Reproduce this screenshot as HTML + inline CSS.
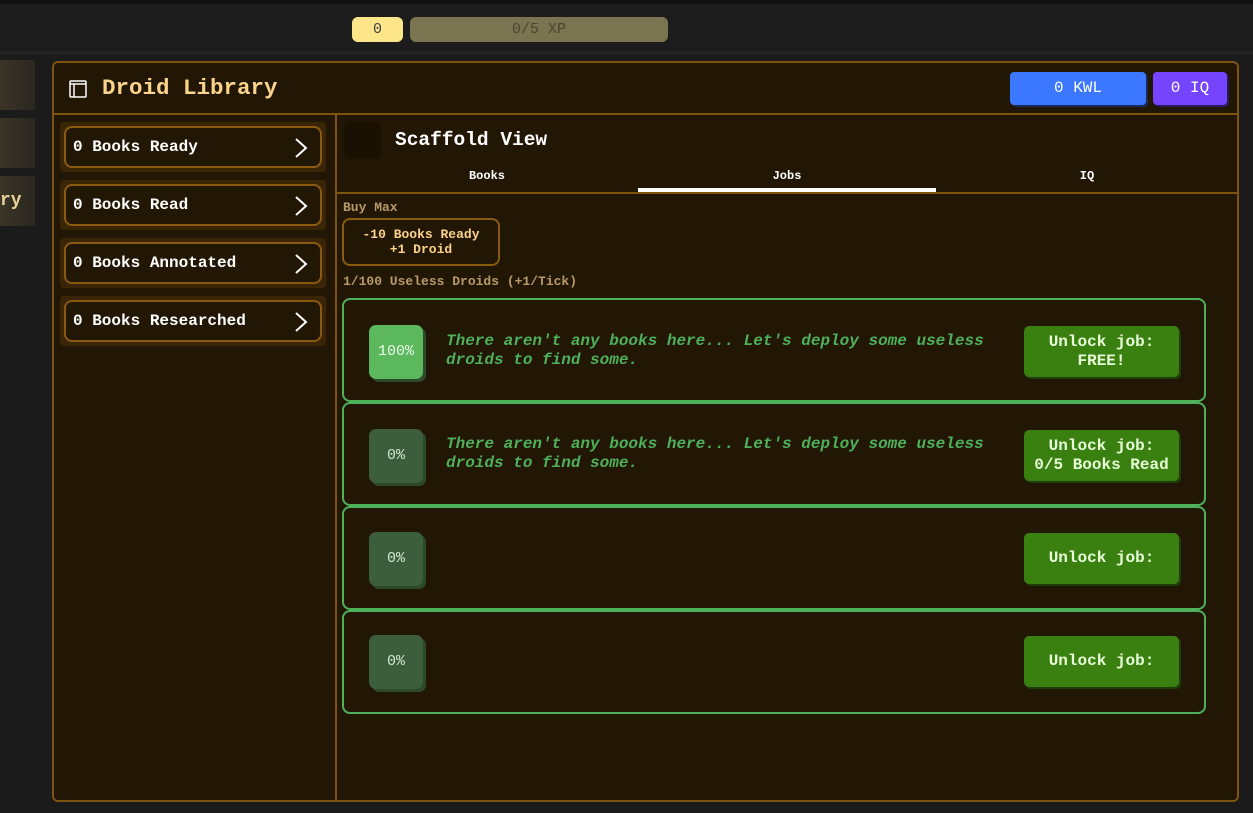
<!DOCTYPE html>
<html><head><meta charset="utf-8"><style>
*{box-sizing:border-box;margin:0;padding:0}
body{width:1253px;height:813px;background:#1b1b1b;position:relative;overflow:hidden;font-family:"Liberation Mono",monospace;color:#fff}
.abs{position:absolute}
.top{left:0;top:0;width:1253px;height:54px;background:#1c1c1c;border-top:4px solid #111;border-bottom:3px solid #222}
.lvl{left:352px;top:17px;width:51px;height:25px;background:#fde68a;border-radius:6px;color:#444;font-size:15px;text-align:center;line-height:25px}
.xp{left:410px;top:17px;width:258px;height:25px;background:#7a7450;border-radius:6px;color:#4a4630;font-size:15px;text-align:center;line-height:25px}
.side{left:0;width:35px;height:50px;background:linear-gradient(90deg,#3a3526,#2a2720)}
.panel{left:52px;top:61px;width:1187px;height:741px;background:#221604;border:2px solid #7f5410;border-radius:6px}
.title{left:102px;top:75px;font-size:22.5px;font-weight:bold;color:#fcd38a}
.kwl{left:1010px;top:72px;width:136px;height:33px;background:#3b78ff;border-radius:4px;text-align:center;line-height:33px;font-size:16px;box-shadow:2px 2px 0 #1c2a5a}
.iq{left:1153px;top:72px;width:74px;height:33px;background:#7444ff;border-radius:4px;text-align:center;line-height:33px;font-size:16px;box-shadow:2px 2px 0 #2a1a5a}
.hline{left:53px;top:113px;width:1185px;height:2px;background:#7f5410}
.vline{left:335px;top:114px;width:2px;height:687px;background:#7f5410}
.item{left:60px;width:266px;height:50px;background:#3a2506;border-radius:4px;padding:4px}
.item div{width:100%;height:100%;border:2px solid #8a5a10;border-radius:8px;background:#221604;font-weight:bold;font-size:16px;line-height:39px;padding-left:7px;position:relative}
.item svg{position:absolute;right:12px;top:9px}
.tab{top:168px;font-size:12px;font-weight:bold;text-align:center;width:298px}
.rl{left:336px;top:192px;width:902px;height:2px;background:#7f5410}
.row{left:342px;width:864px;height:104px;border:2px solid #4fb05a;border-radius:8px}
.pct{width:54px;height:54px;border-radius:7px;left:369px;font-size:15px;text-align:center;line-height:54px;box-shadow:3px 3px 0 #2c4a2a}
.msg{left:446px;font-style:italic;font-weight:bold;color:#4fb05a;font-size:16px;line-height:19px;width:570px}
.btn{left:1024px;width:155px;height:51px;background:#3a8010;border-radius:5px;font-weight:bold;font-size:16px;color:#e8ffd8;text-align:center;display:flex;align-items:center;justify-content:center;line-height:19px;box-shadow:2px 2px 0 #1f3d0a}
</style></head><body>
<div class="abs top"></div>
<div class="abs lvl">0</div>
<div class="abs xp">0/5 XP</div>
<div class="abs side" style="top:60px"></div>
<div class="abs side" style="top:118px"></div>
<div class="abs side" style="top:176px;color:#e8d29a;font-weight:bold;font-size:18px;line-height:50px">ry</div>
<div class="abs panel"></div>
<svg class="abs" style="left:68px;top:79px" width="20" height="20" viewBox="0 0 20 20" fill="none" stroke="#fff" stroke-width="1.5"><rect x="2" y="2" width="16" height="16" rx="1"/><line x1="2" y1="5" x2="18" y2="5"/><line x1="6" y1="5" x2="6" y2="18"/></svg>
<div class="abs title">Droid Library</div>
<div class="abs kwl">0 KWL</div>
<div class="abs iq">0 IQ</div>
<div class="abs hline"></div>
<div class="abs vline"></div>
<div class="abs item" style="top:122px"><div>0 Books Ready<svg width="14" height="22" viewBox="0 0 14 22" fill="none" stroke="#fff" stroke-width="2"><path d="M2 2 L12 11 L2 20"/></svg></div></div>
<div class="abs item" style="top:180px"><div>0 Books Read<svg width="14" height="22" viewBox="0 0 14 22" fill="none" stroke="#fff" stroke-width="2"><path d="M2 2 L12 11 L2 20"/></svg></div></div>
<div class="abs item" style="top:238px"><div>0 Books Annotated<svg width="14" height="22" viewBox="0 0 14 22" fill="none" stroke="#fff" stroke-width="2"><path d="M2 2 L12 11 L2 20"/></svg></div></div>
<div class="abs item" style="top:296px"><div>0 Books Researched<svg width="14" height="22" viewBox="0 0 14 22" fill="none" stroke="#fff" stroke-width="2"><path d="M2 2 L12 11 L2 20"/></svg></div></div>
<div class="abs" style="left:344px;top:122px;width:37px;height:37px;background:#1a1103;border-radius:6px"></div>
<div class="abs" style="left:395px;top:129px;font-size:19.5px;font-weight:bold">Scaffold View</div>
<div class="abs tab" style="left:338px;top:169px">Books</div>
<div class="abs tab" style="left:638px;top:169px">Jobs</div>
<div class="abs tab" style="left:938px;top:169px">IQ</div>
<div class="abs" style="left:638px;top:188px;width:298px;height:4px;background:#fff"></div>
<div class="abs rl"></div>
<div class="abs" style="left:343px;top:200px;font-size:13px;font-weight:bold;color:#b89a6a">Buy Max</div>
<div class="abs" style="left:342px;top:218px;width:158px;height:48px;border:2px solid #8a5a10;border-radius:8px;color:#fcd38a;font-size:13px;font-weight:bold;text-align:center;line-height:15px;padding-top:7px">-10 Books Ready<br>+1 Droid</div>
<div class="abs" style="left:343px;top:274px;font-size:13px;font-weight:bold;color:#b89a6a">1/100 Useless Droids (+1/Tick)</div>
<div class="abs row" style="top:298px"></div>
<div class="abs row" style="top:402px"></div>
<div class="abs row" style="top:506px"></div>
<div class="abs row" style="top:610px"></div>
<div class="abs pct" style="top:325px;background:#5cb85c;color:#eaffea">100%</div>
<div class="abs pct" style="top:429px;background:#3d5e3d;color:#cfe8cf">0%</div>
<div class="abs pct" style="top:532px;background:#3d5e3d;color:#cfe8cf">0%</div>
<div class="abs pct" style="top:635px;background:#3d5e3d;color:#cfe8cf">0%</div>
<div class="abs msg" style="top:332px">There aren't any books here... Let's deploy some useless droids to find some.</div>
<div class="abs msg" style="top:435px">There aren't any books here... Let's deploy some useless droids to find some.</div>
<div class="abs btn" style="top:326px">Unlock job:<br>FREE!</div>
<div class="abs btn" style="top:430px">Unlock job:<br>0/5 Books Read</div>
<div class="abs btn" style="top:533px">Unlock job:</div>
<div class="abs btn" style="top:636px">Unlock job:</div>
</body></html>
